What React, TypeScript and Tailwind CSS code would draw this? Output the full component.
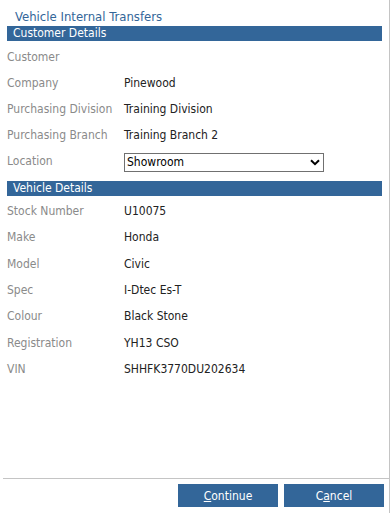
import React from 'react';

const font = { fontFamily: '"DejaVu Sans Condensed", "Noto Sans", sans-serif' };

const Row: React.FC<{ label: string; value?: string; tall?: boolean }> = ({ label, value, tall }) => (
  <div className={`flex items-center ${tall ? 'h-[26.34px]' : 'h-[26px]'}`}>
    <div className="w-[124px] pl-[7px] text-[12px] text-[#8a8a8a]">{label}</div>
    <div className="text-[12px] text-[#222]">{value}</div>
  </div>
);

const SectionBar: React.FC<{ title: string }> = ({ title }) => (
  <div className="mx-[7px] h-[15px] bg-[#336699] text-white text-[12px] leading-[15px] pl-[6px]">{title}</div>
);

export default function App() {
  return (
    <div className="w-[391px] h-[513px] bg-white flex flex-col" style={font}>
      <div className="flex-1 flex flex-col border-r border-[#c4c4c4] mr-[1px]">
        <div className="pl-[15px] pt-[10px] h-[26px] text-[13px] leading-[14px] text-[#336699]">Vehicle Internal Transfers</div>
        <SectionBar title="Customer Details" />
        <div className="pt-[3px]">
          <Row label="Customer" />
          <Row label="Company" value="Pinewood" />
          <Row label="Purchasing Division" value="Training Division" />
          <Row label="Purchasing Branch" value="Training Branch 2" />
          <div className="flex items-center h-[26px]">
            <div className="w-[124px] pl-[7px] text-[12px] text-[#8a8a8a]">Location</div>
            <div className="mt-[2px] w-[200px] h-[19px] border border-[#707070] flex items-center justify-between pl-[2px] pr-[3px] text-[12px] text-black">
              <span>Showroom</span>
              <svg width="10" height="7" viewBox="0 0 10 7"><path d="M1 1.2 L5 5.2 L9 1.2" fill="none" stroke="#000" strokeWidth="2" /></svg>
            </div>
          </div>
        </div>
        <div className="h-[7px]" />
        <SectionBar title="Vehicle Details" />
        <div className="pt-[2px]">
          <Row tall label="Stock Number" value="U10075" />
          <Row tall label="Make" value="Honda" />
          <Row tall label="Model" value="Civic" />
          <Row tall label="Spec" value="I-Dtec Es-T" />
          <Row tall label="Colour" value="Black Stone" />
          <Row tall label="Registration" value="YH13 CSO" />
          <Row tall label="VIN" value="SHHFK3770DU202634" />
        </div>
        <div className="flex-1" />
        <div className="ml-[3px] border-t border-[#c4c4c4] h-[35px] flex justify-end items-start pt-[5px] pr-[5px] gap-[6px]">
          <button className="w-[100px] h-[23px] bg-[#336699] text-white text-[12px]"><span className="underline">C</span>ontinue</button>
          <button className="w-[100px] h-[23px] bg-[#336699] text-white text-[12px]">C<span className="underline">a</span>ncel</button>
        </div>
      </div>
    </div>
  );
}
